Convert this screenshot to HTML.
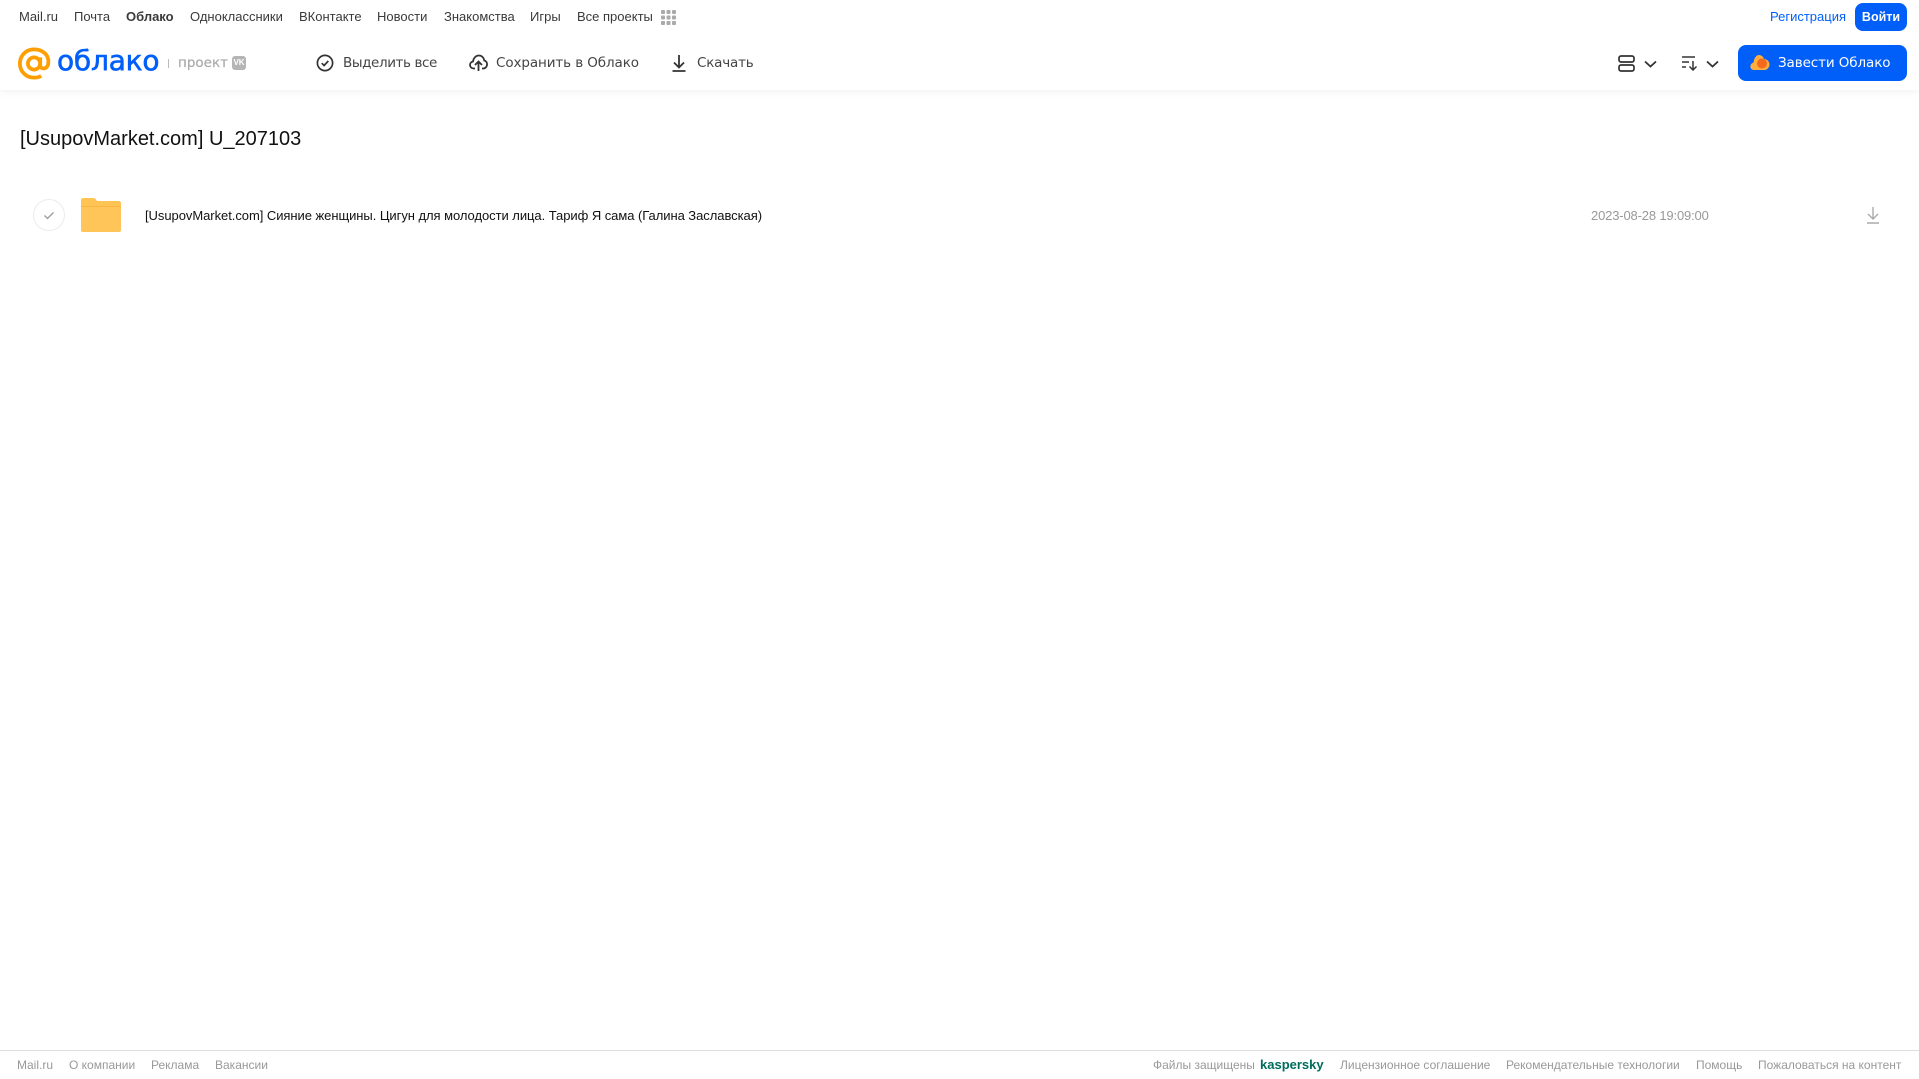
<!DOCTYPE html>
<html lang="ru"><head><meta charset="utf-8"><title>Облако</title>
<style>
html,body{margin:0;padding:0;background:#fff;width:1919px;height:1079px;overflow:hidden}
body{font-family:"Liberation Sans","DejaVu Sans",sans-serif;position:relative}
.t{position:absolute;white-space:nowrap;line-height:20px;height:20px}
.n{font-size:13px;color:#3a3a3a;top:7px}
.a{color:#444;top:53px;font-family:"DejaVu Sans",sans-serif;font-size:13.5px;letter-spacing:-.1px}
.f{font-size:12px;color:#999;top:1055px}
svg{position:absolute;display:block}
#hd{position:absolute;left:0;top:0;width:1919px;height:90px;background:#fff;box-shadow:0 1px 8px rgba(0,0,0,.07)}
</style></head><body>
<div id="hd"></div>
<span class="t n" style="left:19px">Mail.ru</span>
<span class="t n" style="left:74px">Почта</span>
<span class="t n" style="left:126px;font-weight:bold">Облако</span>
<span class="t n" style="left:190px">Одноклассники</span>
<span class="t n" style="left:299px">ВКонтакте</span>
<span class="t n" style="left:377px">Новости</span>
<span class="t n" style="left:444px">Знакомства</span>
<span class="t n" style="left:530px">Игры</span>
<span class="t n" style="left:577px">Все проекты</span>
<svg style="left:661px;top:10px" width="15" height="15" fill="#aaa"><rect width="4" height="4" rx="1"/><rect x="5.500" width="4" height="4" rx="1"/><rect x="11" width="4" height="4" rx="1"/><rect y="5.500" width="4" height="4" rx="1"/><rect x="5.500" y="5.500" width="4" height="4" rx="1"/><rect x="11" y="5.500" width="4" height="4" rx="1"/><rect y="11" width="4" height="4" rx="1"/><rect x="5.500" y="11" width="4" height="4" rx="1"/><rect x="11" y="11" width="4" height="4" rx="1"/></svg>
<span class="t n" style="left:1770px;color:#005ff9">Регистрация</span>
<div style="position:absolute;left:1855px;top:3px;width:52px;height:28px;background:#005ff9;border-radius:8px;color:#fff;font-size:12.500px;font-weight:bold;line-height:28px;text-align:center">Войти</div>

<svg style="left:18px;top:47px" width="34" height="33" viewBox="0 0 36 34" fill="none" stroke="#ff9e00" stroke-width="4"><circle cx="17" cy="17" r="6.500"/><path d="M23.500 10.500v8.500c0 4.500 7.500 4.500 8.500-1.500C33.500 8 26 2 17 2 8.500 2 2 8.500 2 17s6.500 15 15 15c3 0 5.500-.7 7.500-2"/></svg>
<span class="t" style="left:57px;top:41px;height:40px;line-height:40px;font-family:'DejaVu Sans',sans-serif;font-size:28px;color:#005ff9;letter-spacing:-.2px;-webkit-text-stroke:.6px #005ff9">облако</span>
<div style="position:absolute;left:168px;top:59px;width:1px;height:9px;background:#bbb"></div>
<span class="t" style="left:178px;top:53px;color:#aaa;font-family:'DejaVu Sans',sans-serif;font-size:13.500px;-webkit-text-stroke:.2px #aaa">проект</span>
<div style="position:absolute;left:232px;top:56px;width:14px;height:14px;background:#b5b5b5;border-radius:3px;color:#fff;font-size:8px;font-weight:bold;line-height:14px;text-align:center">VK</div>

<svg style="left:316px;top:54px" width="18" height="18" viewBox="0 0 18 18" fill="none" stroke="#333" stroke-width="1.700"><circle cx="9" cy="9" r="7.600"/><path d="M5.800 9.200l2.300 2.300 4.200-4.500"/></svg>
<span class="t a" style="left:343px;letter-spacing:-.4px">Выделить все</span>
<svg style="left:469px;top:54px" width="19" height="18" viewBox="0 0 19 18" fill="none" stroke="#333" stroke-width="1.800"><path d="M6 14.500H4.800C2.600 14.500 1 13 1 11c0-1.800 1.300-3.200 3-3.500C4.500 4 6.800 1.500 9.800 1.500c3 0 5.200 2.300 5.500 5 1.700.4 2.800 2 2.800 3.700 0 2.400-1.700 4.300-4 4.300H13"/><path d="M9.500 17V8M6 11l3.500-3.500L13 11"/></svg>
<span class="t a" style="left:496px">Сохранить в Облако</span>
<svg style="left:671px;top:54px" width="16" height="18" viewBox="0 0 16 18" fill="none" stroke="#333" stroke-width="1.800"><path d="M8 1v12M3 8.500L8 13.500l5-5M1.500 17h13"/></svg>
<span class="t a" style="left:697px;letter-spacing:-.2px">Скачать</span>

<svg style="left:1618px;top:55px" width="17" height="17" viewBox="0 0 17 17" fill="none" stroke="#333" stroke-width="1.700"><rect x="1" y="1" width="15" height="6" rx="2"/><rect x="1" y="10" width="15" height="6" rx="2"/></svg>
<svg style="left:1644px;top:60px" width="13" height="8" viewBox="0 0 13 8" fill="none" stroke="#333" stroke-width="1.800"><path d="M1 1.500l5.500 5 5.500-5"/></svg>
<svg style="left:1681px;top:55px" width="17" height="16" viewBox="0 0 17 16" fill="none" stroke="#333" stroke-width="1.500"><path d="M1 2h13M1 7h7M1 12h4M12 6v9M8.500 11.500l3.500 3.500 3.500-3.500"/></svg>
<svg style="left:1706px;top:60px" width="13" height="8" viewBox="0 0 13 8" fill="none" stroke="#333" stroke-width="1.800"><path d="M1 1.500l5.500 5 5.500-5"/></svg>
<div style="position:absolute;left:1738px;top:45px;width:169px;height:36px;background:#005ff9;border-radius:8px"></div>
<svg style="left:1750px;top:54px" width="20" height="18" viewBox="0 0 20 18"><path d="M4 16C1.500 16 0 14 .5 11.500 1 9.500 2.500 9 3.500 8.500 4 4 6.500 1 9 1c2.500 0 4.500 2 5 4 3 0 5.500 2.500 5.500 5.500S17 16 14.500 16z" fill="#ffae3a"/><circle cx="12" cy="9.500" r="5" fill="#f4691e"/></svg>
<span class="t a" style="left:1778px;color:#fff">Завести Облако</span>

<span class="t" style="left:20px;top:127px;height:24px;line-height:24px;font-size:20px;color:#111">[UsupovMarket.com] U_207103</span>

<div style="position:absolute;left:33px;top:199px;width:30px;height:30px;border:1px solid #ececec;border-radius:50%"></div>
<svg style="left:43px;top:211px" width="12" height="9" viewBox="0 0 12 9" fill="none" stroke="#999" stroke-width="1.300"><path d="M1.500 4.500l3 3 6-6"/></svg>
<svg style="left:81px;top:198px" width="40" height="34" viewBox="0 0 40 34"><path d="M2 0h10c2 0 3 1 4 3h22c1 0 2 1 2 2v27c0 1-1 2-2 2H2c-1 0-2-1-2-2V2C0 1 1 0 2 0z" fill="#ffc453"/><path d="M0 9h40v23c0 1-1 2-2 2H2c-1 0-2-1-2-2z" fill="#ffc558"/><path d="M0 8h40v1H0z" fill="#f7b644"/></svg>
<span class="t" style="left:145px;top:206px;font-size:13px;color:#111;letter-spacing:-.05px">[UsupovMarket.com] Сияние женщины. Цигун для молодости лица. Тариф Я сама (Галина Заславская)</span>
<span class="t" style="left:1591px;top:206px;font-size:13px;color:#999;letter-spacing:-.16px">2023-08-28 19:09:00</span>
<svg style="left:1866px;top:206px" width="14" height="18" viewBox="0 0 14 18" fill="none" stroke="#aaa" stroke-width="1.400"><path d="M7 1v11.500M2 8l5 5 5-5M1 17h12"/></svg>

<div style="position:absolute;left:0;top:1050px;width:1919px;height:1px;background:#ddd"></div>
<span class="t f" style="left:17px">Mail.ru</span>
<span class="t f" style="left:69px">О компании</span>
<span class="t f" style="left:151px">Реклама</span>
<span class="t f" style="left:215px">Вакансии</span>
<span class="t f" style="left:1153px">Файлы защищены</span>
<span class="t f" style="left:1260px;color:#006d5c;font-weight:bold;font-size:13px">kaspersky</span>
<span class="t f" style="left:1340px">Лицензионное соглашение</span>
<span class="t f" style="left:1506px">Рекомендательные технологии</span>
<span class="t f" style="left:1696px">Помощь</span>
<span class="t f" style="left:1758px">Пожаловаться на контент</span>
</body></html>
